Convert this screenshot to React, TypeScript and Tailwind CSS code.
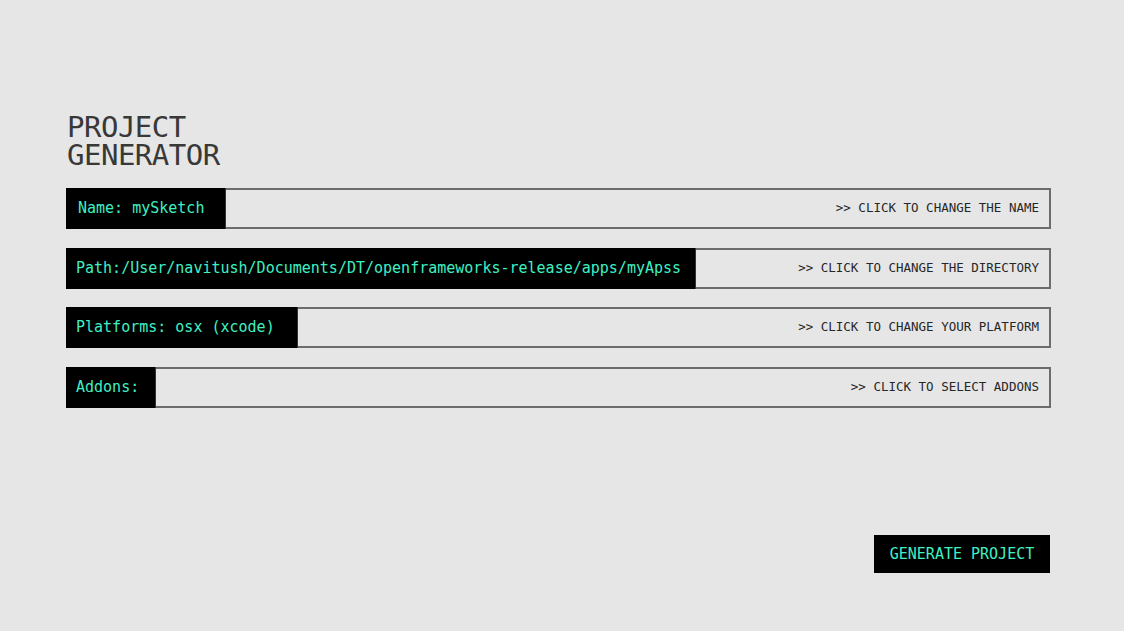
const mono = "font-['DejaVu_Sans_Mono',monospace]";

const rows = [
  { label: "Name: mySketch", width: "w-[160px]", pad: "pl-[12px]", gap: "", hint: ">> CLICK TO CHANGE THE NAME" },
  {
    label: "Path:/User/navitush/Documents/DT/openframeworks-release/apps/myApss",
    width: "w-[630px]",
    pad: "pl-[10px]",
    gap: "mt-[19px]",
    hint: ">> CLICK TO CHANGE THE DIRECTORY",
  },
  { label: "Platforms: osx (xcode)", width: "w-[232px]", pad: "pl-[10px]", gap: "mt-[18px]", hint: ">> CLICK TO CHANGE YOUR PLATFORM" },
  { label: "Addons:", width: "w-[90px]", pad: "pl-[10px]", gap: "mt-[19px]", hint: ">> CLICK TO SELECT ADDONS" },
];

function Row({ row }: { row: (typeof rows)[0] }) {
  return (
    <div className={`${row.gap} flex h-[41px] w-full cursor-pointer items-stretch border-y-2 border-r-2 border-[#6c6c6c]`}>
      {/* black label block sits over the left edge */}
      <div
        className={`${row.width} ${row.pad} -my-[2px] flex shrink-0 items-center border-r border-[#333] bg-black text-[15px] whitespace-nowrap text-[#3ff0c2] ${mono}`}
      >
        {row.label}
      </div>
      <div className={`flex flex-1 items-center justify-end pr-[10px] text-[12.5px] text-[#262626] ${mono}`}>
        {row.hint}
      </div>
    </div>
  );
}

export default function App() {
  return (
    <div className="h-[631px] w-full overflow-hidden bg-[#e6e6e6] pt-[113px] pl-[66px]">
      <div className="flex w-[985px] flex-col">
        <h1 className={`pl-[1px] text-[29px] leading-[28px] tracking-[-0.5px] text-[#383838] ${mono}`}>
          <div>PROJECT</div>
          <div>GENERATOR</div>
        </h1>

        <div className="mt-[19px] flex flex-col">
          {rows.map((row) => (
            <Row key={row.label} row={row} />
          ))}
        </div>

        <button
          className={`mt-[127px] mr-[1px] flex h-[38px] w-[176px] items-center justify-center self-end bg-black text-[15px] text-[#3ff0c2] ${mono}`}
        >
          GENERATE PROJECT
        </button>
      </div>
    </div>
  );
}
